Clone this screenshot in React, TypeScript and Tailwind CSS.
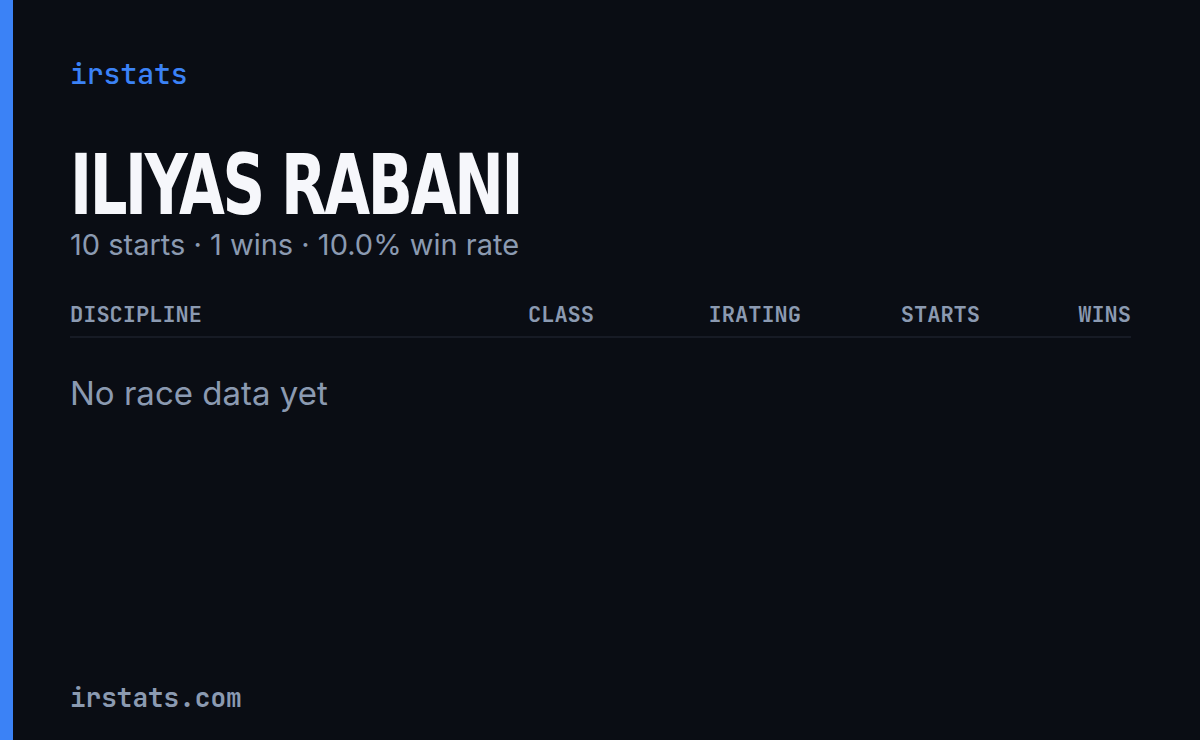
// Player summary card — irstats share image

const MONO = "font-['JetBrains_Mono','DejaVu_Sans_Mono','Liberation_Mono',monospace]";
const SANS = "font-['Inter','Open_Sans',sans-serif]";

const COLUMNS = [
  { label: 'DISCIPLINE', align: 'text-left' },
  { label: 'CLASS', align: 'text-right' },
  { label: 'IRATING', align: 'text-right' },
  { label: 'STARTS', align: 'text-right' },
  { label: 'WINS', align: 'text-right' },
];

export default function App() {
  const stats = { starts: 10, wins: 1 };
  const winRate = ((stats.wins / stats.starts) * 100).toFixed(1);

  return (
    <div className="flex h-[740px] w-[1200px] bg-[#0a0d14] overflow-hidden">
      {/* accent stripe */}
      <div className="w-[13px] shrink-0 bg-[#3b82f6]" />

      <div className="flex flex-1 flex-col pl-[57px] pr-[69px] pt-[54px] pb-[24px]">
        <div className={`${MONO} text-[28px] leading-[40px] font-medium text-[#3b82f6]`}>irstats</div>

        {/* player name — condensed display face */}
        <h1 className="mt-[51px] font-['Liberation_Sans_Narrow','DejaVu_Sans_Condensed',sans-serif] text-[84px] leading-[80px] font-bold tracking-[-3px] text-[#f6f7fb] uppercase">
          <span className="inline-block origin-left scale-x-[0.784] whitespace-nowrap">Iliyas Rabani</span>
        </h1>
        <p className={`${SANS} text-[29px] leading-[40px] text-[#8b9ab1]`}>
          {stats.starts} starts · {stats.wins} wins · {winRate}% win rate
        </p>

        {/* discipline table */}
        <div className={`mt-[35px] grid grid-cols-[1fr_140px_207px_179px_151px] border-b-2 border-[#171b25] pb-[6px] ${MONO} text-[22px] leading-[30px] font-semibold text-[#8b9ab1]`}>
          {COLUMNS.map(col => (
            <div key={col.label} className={col.align}>{col.label}</div>
          ))}
        </div>
        <div className={`mt-[35px] ${SANS} text-[33px] leading-[40px] text-[#8b9ab1]`}>
          No race data yet
        </div>

        {/* footer */}
        <div className={`mt-auto ${MONO} text-[26px] leading-[36px] font-semibold text-[#8b9ab1]`}>irstats.com</div>
      </div>
    </div>
  );
}
